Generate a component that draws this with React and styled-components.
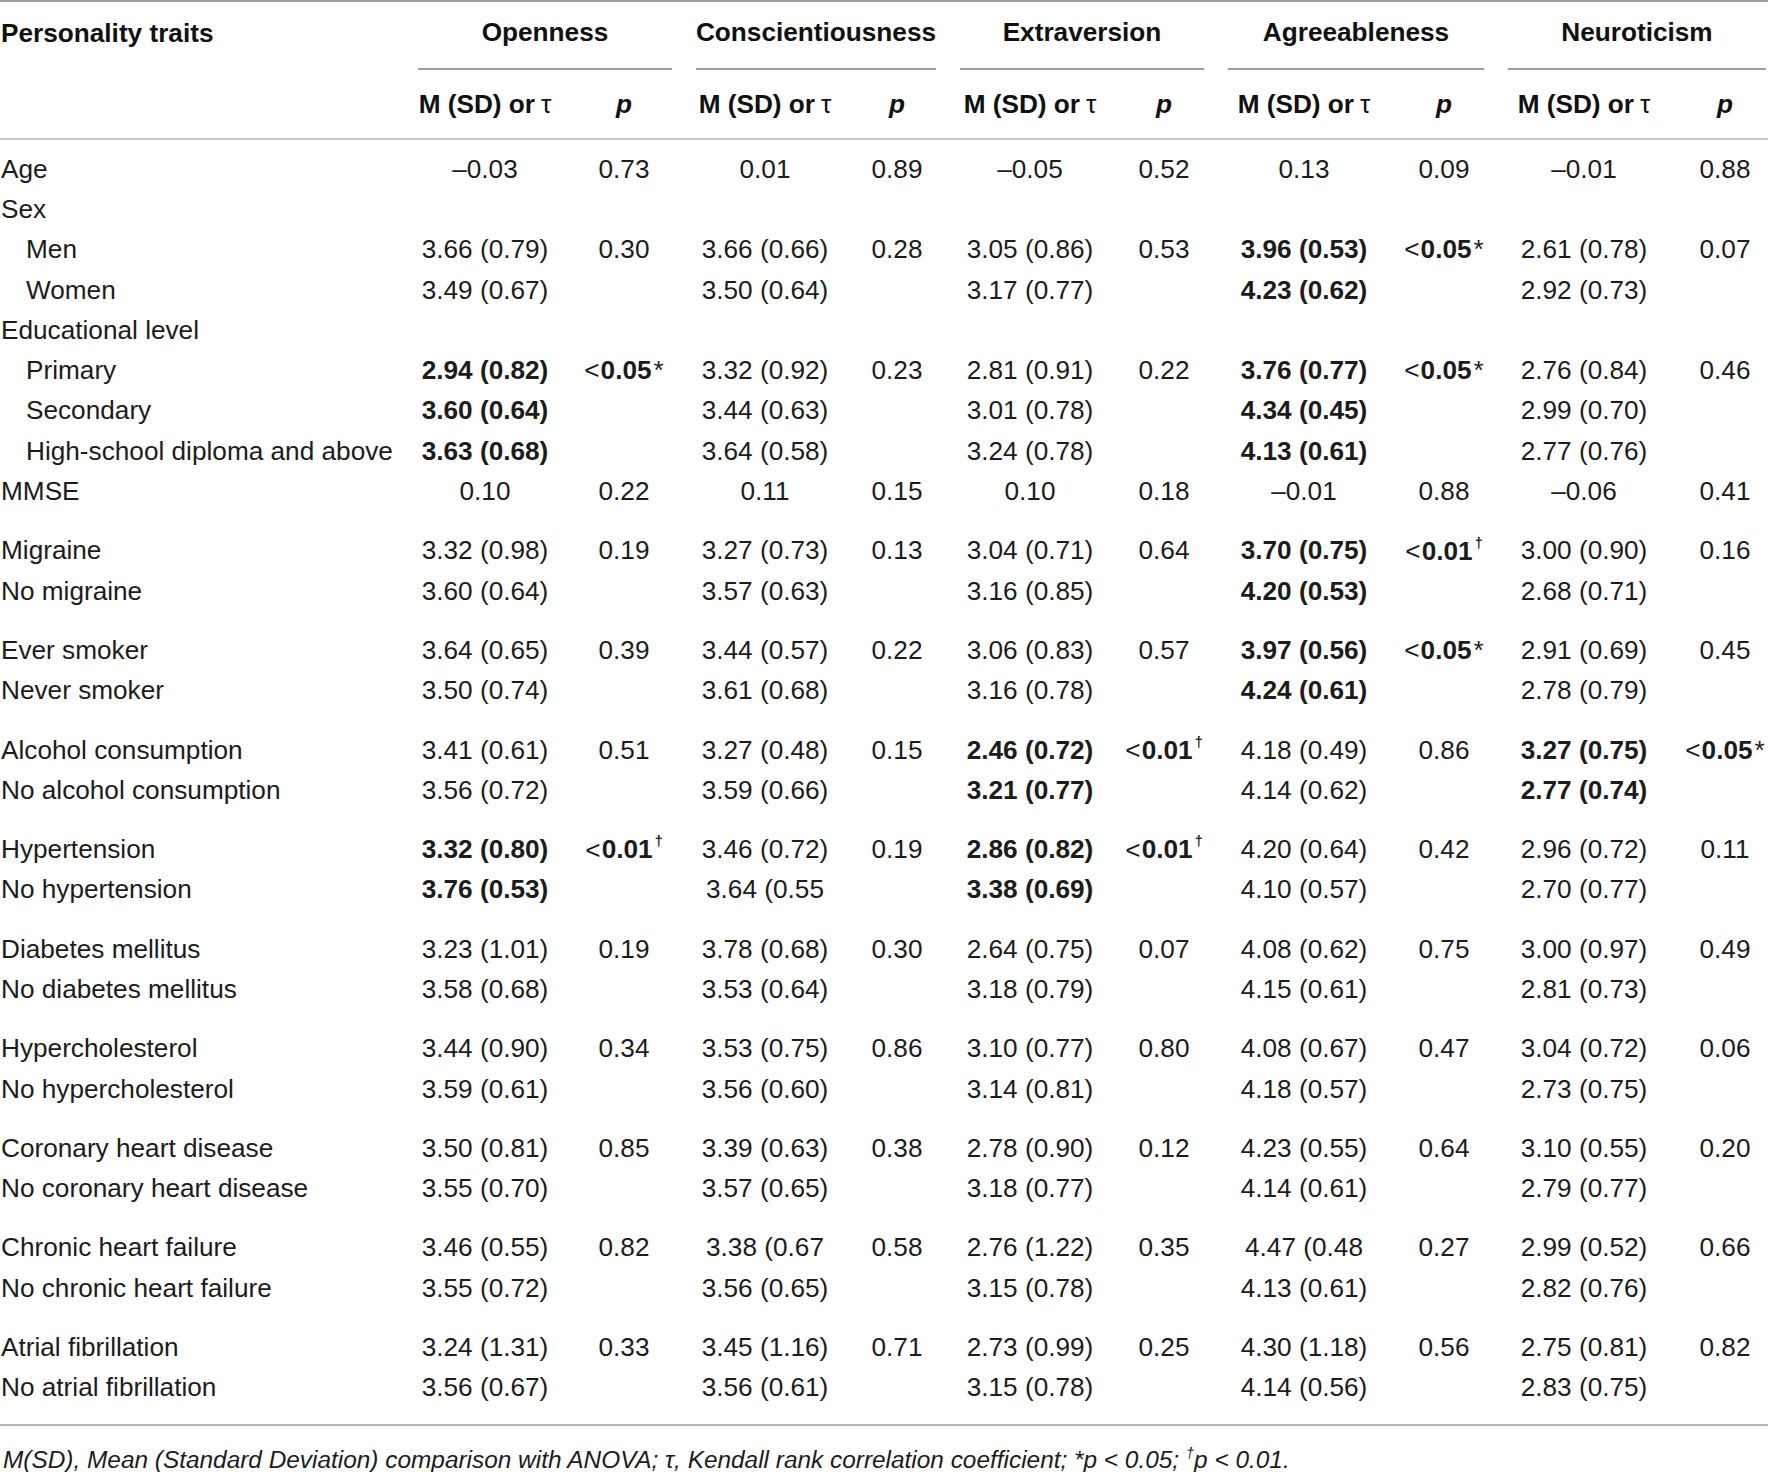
import React from "react";
import styled, { createGlobalStyle } from "styled-components";

const GlobalStyle = createGlobalStyle`
  html, body {
    margin: 0;
    padding: 0;
    background: #ffffff;
  }
  body {
    font-family: "Liberation Sans", Arial, sans-serif;
    color: #1c1c1c;
    overflow: hidden;
  }
`;

// label | (M p) x 5
const COLS = "410px 150px 128px 154px 110px 156px 112px 168px 112px 168px 114px";

const GROUPS = ["Openness", "Conscientiousness", "Extraversion", "Agreeableness", "Neuroticism"];

// "**" = bold value, "<0.05*" / "<0.01+" = significant p
const ROWS = [
  { label: "Age", v: ["–0.03", "0.73", "0.01", "0.89", "–0.05", "0.52", "0.13", "0.09", "–0.01", "0.88"] },
  { label: "Sex", v: [] },
  { label: "Men", indent: true, v: ["3.66 (0.79)", "0.30", "3.66 (0.66)", "0.28", "3.05 (0.86)", "0.53", "**3.96 (0.53)", "<0.05*", "2.61 (0.78)", "0.07"] },
  { label: "Women", indent: true, v: ["3.49 (0.67)", "", "3.50 (0.64)", "", "3.17 (0.77)", "", "**4.23 (0.62)", "", "2.92 (0.73)", ""] },
  { label: "Educational level", v: [] },
  { label: "Primary", indent: true, v: ["**2.94 (0.82)", "<0.05*", "3.32 (0.92)", "0.23", "2.81 (0.91)", "0.22", "**3.76 (0.77)", "<0.05*", "2.76 (0.84)", "0.46"] },
  { label: "Secondary", indent: true, v: ["**3.60 (0.64)", "", "3.44 (0.63)", "", "3.01 (0.78)", "", "**4.34 (0.45)", "", "2.99 (0.70)", ""] },
  { label: "High-school diploma and above", indent: true, v: ["**3.63 (0.68)", "", "3.64 (0.58)", "", "3.24 (0.78)", "", "**4.13 (0.61)", "", "2.77 (0.76)", ""] },
  { label: "MMSE", v: ["0.10", "0.22", "0.11", "0.15", "0.10", "0.18", "–0.01", "0.88", "–0.06", "0.41"] },
  { label: "Migraine", group: true, v: ["3.32 (0.98)", "0.19", "3.27 (0.73)", "0.13", "3.04 (0.71)", "0.64", "**3.70 (0.75)", "<0.01+", "3.00 (0.90)", "0.16"] },
  { label: "No migraine", v: ["3.60 (0.64)", "", "3.57 (0.63)", "", "3.16 (0.85)", "", "**4.20 (0.53)", "", "2.68 (0.71)", ""] },
  { label: "Ever smoker", group: true, v: ["3.64 (0.65)", "0.39", "3.44 (0.57)", "0.22", "3.06 (0.83)", "0.57", "**3.97 (0.56)", "<0.05*", "2.91 (0.69)", "0.45"] },
  { label: "Never smoker", v: ["3.50 (0.74)", "", "3.61 (0.68)", "", "3.16 (0.78)", "", "**4.24 (0.61)", "", "2.78 (0.79)", ""] },
  { label: "Alcohol consumption", group: true, v: ["3.41 (0.61)", "0.51", "3.27 (0.48)", "0.15", "**2.46 (0.72)", "<0.01+", "4.18 (0.49)", "0.86", "**3.27 (0.75)", "<0.05*"] },
  { label: "No alcohol consumption", v: ["3.56 (0.72)", "", "3.59 (0.66)", "", "**3.21 (0.77)", "", "4.14 (0.62)", "", "**2.77 (0.74)", ""] },
  { label: "Hypertension", group: true, v: ["**3.32 (0.80)", "<0.01+", "3.46 (0.72)", "0.19", "**2.86 (0.82)", "<0.01+", "4.20 (0.64)", "0.42", "2.96 (0.72)", "0.11"] },
  { label: "No hypertension", v: ["**3.76 (0.53)", "", "3.64 (0.55", "", "**3.38 (0.69)", "", "4.10 (0.57)", "", "2.70 (0.77)", ""] },
  { label: "Diabetes mellitus", group: true, v: ["3.23 (1.01)", "0.19", "3.78 (0.68)", "0.30", "2.64 (0.75)", "0.07", "4.08 (0.62)", "0.75", "3.00 (0.97)", "0.49"] },
  { label: "No diabetes mellitus", v: ["3.58 (0.68)", "", "3.53 (0.64)", "", "3.18 (0.79)", "", "4.15 (0.61)", "", "2.81 (0.73)", ""] },
  { label: "Hypercholesterol", group: true, v: ["3.44 (0.90)", "0.34", "3.53 (0.75)", "0.86", "3.10 (0.77)", "0.80", "4.08 (0.67)", "0.47", "3.04 (0.72)", "0.06"] },
  { label: "No hypercholesterol", v: ["3.59 (0.61)", "", "3.56 (0.60)", "", "3.14 (0.81)", "", "4.18 (0.57)", "", "2.73 (0.75)", ""] },
  { label: "Coronary heart disease", group: true, v: ["3.50 (0.81)", "0.85", "3.39 (0.63)", "0.38", "2.78 (0.90)", "0.12", "4.23 (0.55)", "0.64", "3.10 (0.55)", "0.20"] },
  { label: "No coronary heart disease", v: ["3.55 (0.70)", "", "3.57 (0.65)", "", "3.18 (0.77)", "", "4.14 (0.61)", "", "2.79 (0.77)", ""] },
  { label: "Chronic heart failure", group: true, v: ["3.46 (0.55)", "0.82", "3.38 (0.67", "0.58", "2.76 (1.22)", "0.35", "4.47 (0.48", "0.27", "2.99 (0.52)", "0.66"] },
  { label: "No chronic heart failure", v: ["3.55 (0.72)", "", "3.56 (0.65)", "", "3.15 (0.78)", "", "4.13 (0.61)", "", "2.82 (0.76)", ""] },
  { label: "Atrial fibrillation", group: true, v: ["3.24 (1.31)", "0.33", "3.45 (1.16)", "0.71", "2.73 (0.99)", "0.25", "4.30 (1.18)", "0.56", "2.75 (0.81)", "0.82"] },
  { label: "No atrial fibrillation", v: ["3.56 (0.67)", "", "3.56 (0.61)", "", "3.15 (0.78)", "", "4.14 (0.56)", "", "2.83 (0.75)", ""] },
];

const Page = styled.div`
  width: 1768px;
  overflow: hidden;
  font-size: 26.2px;
`;

const Table = styled.div`
  width: 1782px;
`;

const Head = styled.div`
  display: grid;
  grid-template-columns: ${COLS};
  grid-template-rows: 68px 68px;
  border-top: 2px solid #9c9c9c;
  border-bottom: 2px solid #c6c6c6;
  font-weight: 700;
  color: #111;
`;

const TraitTitle = styled.div`
  grid-row: 1;
  grid-column: 1;
  display: flex;
  align-items: center;
  padding: 0 0 5px 1px;
  white-space: nowrap;
`;

const GroupTitle = styled.div`
  grid-row: 1;
  grid-column: span 2;
  display: flex;
  align-items: center;
  justify-content: center;
  margin: 0 16px 0 8px;
  padding-bottom: 5px;
  border-bottom: 2px solid #9c9c9c;
  white-space: nowrap;
`;

const SubHead = styled.div`
  grid-row: 2;
  display: flex;
  align-items: center;
  justify-content: center;
  white-space: nowrap;
  font-style: ${(p) => (p.$italic ? "italic" : "normal")};
`;

const Tau = styled.span`
  font-weight: 400;
  margin-left: 6px;
`;

const Body = styled.div`
  padding: 9px 0 16px;
  border-bottom: 2px solid #b4b4b4;
`;

const Row = styled.div`
  display: grid;
  grid-template-columns: ${COLS};
  align-items: center;
  height: 40.3px;
  margin-top: ${(p) => (p.$group ? "19px" : "0")};
`;

const Label = styled.div`
  padding-left: ${(p) => (p.$indent ? "26px" : "1px")};
  white-space: nowrap;
`;

const Cell = styled.div`
  text-align: center;
  white-space: nowrap;
  font-weight: ${(p) => (p.$bold ? 700 : 400)};
`;

const Lt = styled.span`
  font-weight: 400;
  margin-right: 1px;
`;

const Star = styled.span`
  font-weight: 400;
  margin-left: 2px;
`;

const Dagger = styled.span`
  font-weight: 700;
  font-size: 0.55em;
  vertical-align: 0.85em;
  margin-left: 2px;
`;

const Footnote = styled.p`
  margin: 19px 0 0;
  padding-left: 3px;
  font-style: italic;
  font-size: 24.4px;
  white-space: nowrap;
`;

const FootDagger = styled.span`
  font-size: 0.6em;
  vertical-align: 0.7em;
`;

function Value({ v }) {
  if (v.startsWith("<")) {
    const num = v.slice(1, -1);
    const mark = v.slice(-1);
    return (
      <Cell>
        <Lt>&lt;</Lt>
        <strong>{num}</strong>
        {mark === "*" ? <Star>*</Star> : <Dagger>†</Dagger>}
      </Cell>
    );
  }
  if (v.startsWith("**")) return <Cell $bold>{v.slice(2)}</Cell>;
  return <Cell>{v}</Cell>;
}

export default function App() {
  return (
    <>
      <GlobalStyle />
      <Page>
        <Table>
          <Head>
            <TraitTitle>Personality traits</TraitTitle>
            {GROUPS.map((g) => (
              <GroupTitle key={g}>{g}</GroupTitle>
            ))}
            <SubHead style={{ gridColumn: 1 }} />
            {GROUPS.map((g) => (
              <React.Fragment key={g}>
                <SubHead>
                  M (SD) or<Tau>τ</Tau>
                </SubHead>
                <SubHead $italic>p</SubHead>
              </React.Fragment>
            ))}
          </Head>

          <Body>
            {ROWS.map((r) => (
              <Row key={r.label} $group={r.group}>
                <Label $indent={r.indent}>{r.label}</Label>
                {r.v.map((v, i) => (
                  <Value key={i} v={v} />
                ))}
              </Row>
            ))}
          </Body>
        </Table>

        <Footnote>
          M(SD), Mean (Standard Deviation) comparison with ANOVA; τ, Kendall rank correlation coefficient; *p &lt; 0.05;{" "}
          <FootDagger>†</FootDagger>p &lt; 0.01.
        </Footnote>
      </Page>
    </>
  );
}
